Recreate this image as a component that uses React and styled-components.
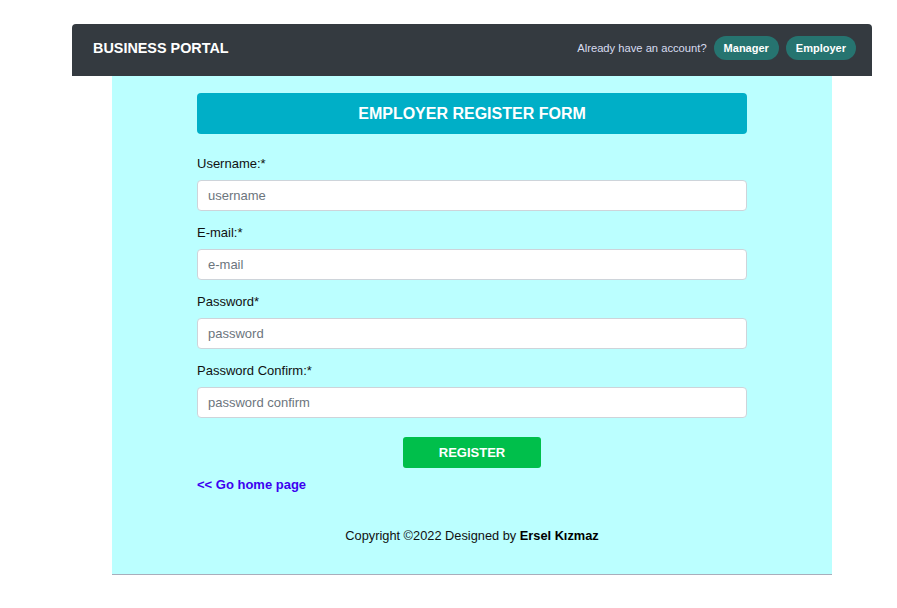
import styled, { createGlobalStyle } from "styled-components";

const GlobalStyle = createGlobalStyle`
  body {
    margin: 0;
    background: #ffffff;
    font-family: "Liberation Sans", Arial, sans-serif;
  }
`;

const Page = styled.div`
  width: 800px;
  padding: 24px 0 0 72px;
`;

const NavBar = styled.nav`
  box-sizing: border-box;
  display: flex;
  align-items: center;
  justify-content: space-between;
  height: 52px;
  padding: 0 16px 4px 21px;
  background-color: #343a40;
  border-radius: 4px 4px 0 0;
`;

const Brand = styled.div`
  color: #ffffff;
  font-size: 14.4px;
  font-weight: 700;
`;

const NavRight = styled.div`
  display: flex;
  align-items: center;
  gap: 7px;
  span {
    color: #d8dcf0;
    font-size: 11.2px;
  }
`;

const PillButton = styled.button`
  height: 24px;
  padding: 0 10px;
  border: none;
  border-radius: 12px;
  background-color: #267470;
  color: #ffffff;
  font-family: inherit;
  font-size: 11px;
  font-weight: 700;
`;

const Main = styled.main`
  margin: 0 40px;
  padding: 17px 85px 31px;
  background-color: #bbffff;
  border-bottom: 1px solid #a9adbb;
`;

const FormHeader = styled.div`
  display: flex;
  align-items: center;
  justify-content: center;
  height: 41px;
  background-color: #00afc7;
  border-radius: 4px;
  color: #ffffff;
  font-size: 16px;
  font-weight: 700;
`;

const Form = styled.form`
  display: flex;
  flex-direction: column;
  padding-top: 22px;
`;

const Field = styled.div`
  display: flex;
  flex-direction: column;
  gap: 9px;
  margin-bottom: 14px;
  label {
    font-size: 13px;
    color: #111;
  }
`;

const Input = styled.input`
  box-sizing: border-box;
  height: 31px;
  padding: 0 10px;
  border: 1px solid #ced4da;
  border-radius: 4px;
  background: #ffffff;
  font-family: inherit;
  font-size: 13px;
  &::placeholder {
    color: #6c757d;
  }
`;

const Register = styled.button`
  align-self: center;
  width: 138px;
  height: 31px;
  margin-top: 5px;
  border: none;
  border-radius: 3px;
  background-color: #00bf4b;
  color: #ffffff;
  font-family: inherit;
  font-size: 13px;
  font-weight: 700;
`;

const HomeLink = styled.a`
  display: block;
  margin-top: 9px;
  color: #3d00f0;
  font-size: 13px;
  font-weight: 700;
  text-decoration: none;
`;

const Footer = styled.footer`
  margin-top: 36px;
  text-align: center;
  font-size: 12.8px;
  color: #111;
  b {
    color: #000;
  }
`;

const fields = [
  { label: "Username:*", placeholder: "username", type: "text" },
  { label: "E-mail:*", placeholder: "e-mail", type: "email" },
  { label: "Password*", placeholder: "password", type: "password" },
  { label: "Password Confirm:*", placeholder: "password confirm", type: "password" },
];

const App = () => {
  return (
    <>
      <GlobalStyle />
      <Page>
        <NavBar>
          <Brand>BUSINESS PORTAL</Brand>
          <NavRight>
            <span>Already have an account?</span>
            <PillButton>Manager</PillButton>
            <PillButton>Employer</PillButton>
          </NavRight>
        </NavBar>
        <Main>
          <FormHeader>EMPLOYER REGISTER FORM</FormHeader>
          <Form onSubmit={(e) => e.preventDefault()}>
            {fields.map((f) => (
              <Field key={f.placeholder}>
                <label>{f.label}</label>
                <Input type={f.type} placeholder={f.placeholder} />
              </Field>
            ))}
            <Register type="submit">REGISTER</Register>
          </Form>
          <HomeLink href="#">&lt;&lt; Go home page</HomeLink>
          <Footer>
            Copyright ©2022 Designed by <b>Ersel Kızmaz</b>
          </Footer>
        </Main>
      </Page>
    </>
  );
};

export default App;
